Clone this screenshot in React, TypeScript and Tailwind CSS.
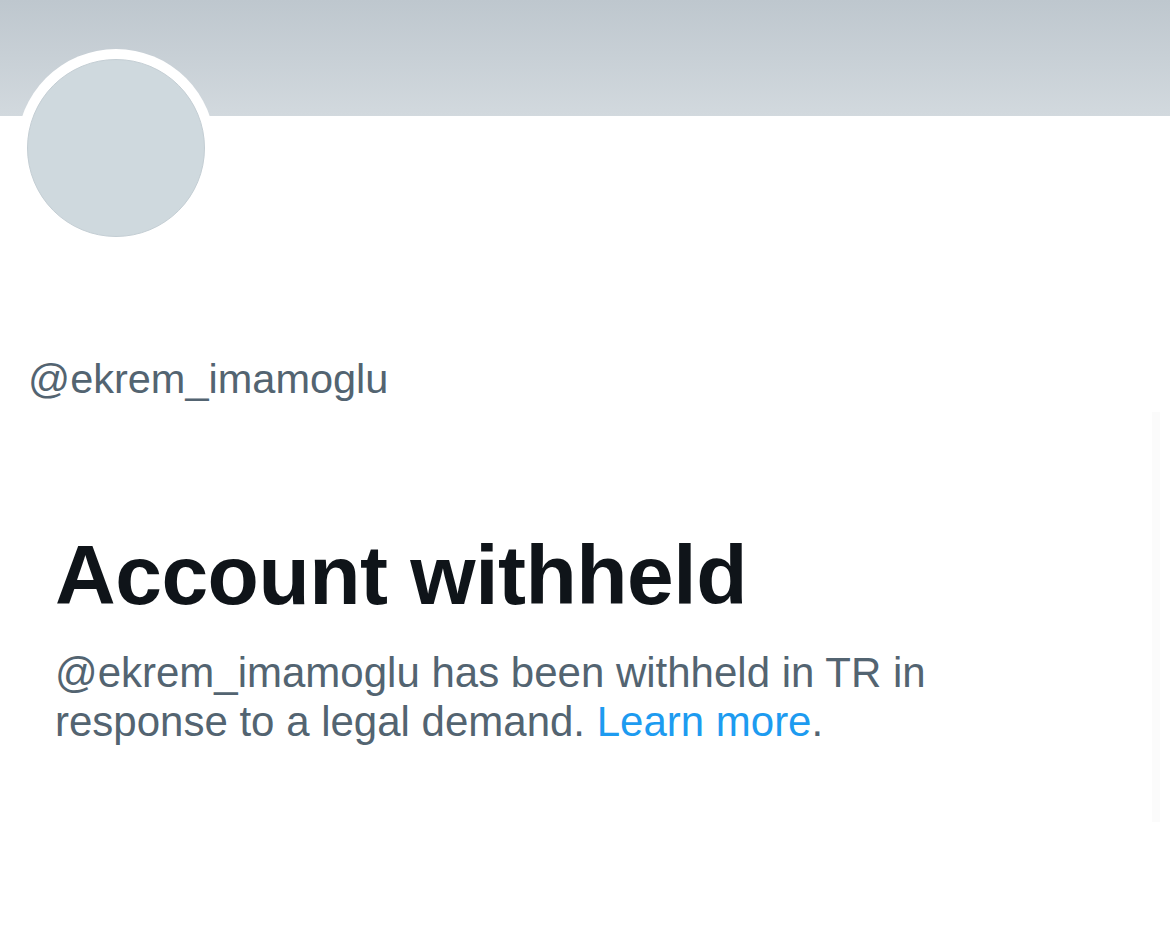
export default function App() {
  return (
    <div className="relative min-h-[942px] w-[1170px] overflow-hidden bg-white" style={{ fontFamily: '"Liberation Sans", Arial, sans-serif' }}>
      {/* Banner */}
      <div className="h-[116px] w-full bg-gradient-to-b from-[#bec7ce] to-[#d2d9de]" />

      {/* Avatar */}
      <div className="-mt-[67px] ml-[17px] flex h-[198px] w-[198px] items-center justify-center rounded-full bg-white">
        <div className="h-[178px] w-[178px] rounded-full border border-[#c4ced4] bg-[#cfd9de]" />
      </div>

      {/* Handle */}
      <div className="mt-[108px] pl-[28px] text-[41.5px] leading-[48px] text-[#536471]">@ekrem_imamoglu</div>

      {/* Withheld notice */}
      <div className="mt-[122px] pl-[55px] pr-[150px]">
        <h1 className="text-[84px] font-bold leading-[100px] tracking-[-0.5px] text-[#0f1419]">Account withheld</h1>
        <p className="mt-[23px] text-[42px] leading-[49px] text-[#536471]">
          @ekrem_imamoglu has been withheld in TR in
          <br />
          response to a legal demand. <span className="text-[#1d9bf0]">Learn more</span>.
        </p>
      </div>

      {/* Faint scrollbar track */}
      <div className="absolute right-[10px] top-[412px] h-[410px] w-[8px] bg-[#fbfbfb]" />
    </div>
  );
}
